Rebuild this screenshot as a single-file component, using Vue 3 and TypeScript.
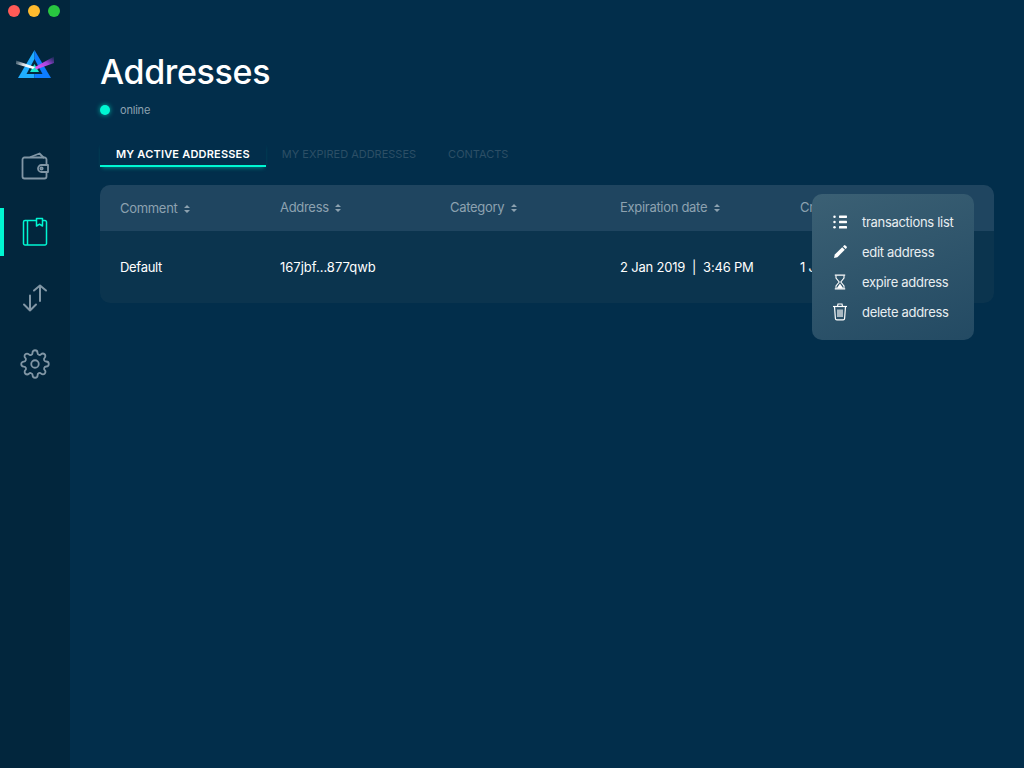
<template>
  <div class="app">
    <aside class="sidebar">
      <div class="traffic">
        <span class="light red"></span>
        <span class="light yellow"></span>
        <span class="light green"></span>
      </div>

      <div class="logo">
        <svg width="40" height="32" viewBox="0 0 40 32">
          <defs>
            <linearGradient id="rayL" x1="0" y1="0" x2="1" y2="0.4">
              <stop offset="0" stop-color="#fff" stop-opacity="0.15" />
              <stop offset="0.5" stop-color="#fff" stop-opacity="0.85" />
              <stop offset="1" stop-color="#fff" />
            </linearGradient>
            <linearGradient id="rayR" x1="0" y1="1" x2="1" y2="0">
              <stop offset="0" stop-color="#e65cf5" />
              <stop offset="0.55" stop-color="#a843e0" />
              <stop offset="1" stop-color="#7a3fc0" stop-opacity="0.1" />
            </linearGradient>
          </defs>
          <polygon points="19.5,1 19.5,29 3,29" fill="#20aeff" />
          <polygon points="19.5,1 19.5,29 36,29" fill="#0d7cff" />
          <polygon points="19.5,10 11.5,25 27.5,25" fill="#04273f" />
          <polygon points="19.5,15 15,23 24,23" fill="#19e6d0" />
          <polygon points="1,11.5 1,15 18,20 20,18" fill="url(#rayL)" />
          <polygon points="20,18 21,20.5 39,14 39,7.5" fill="url(#rayR)" />
        </svg>
      </div>

      <nav class="nav">
        <a v-for="item in navItems" :key="item.name" class="nav-item" :class="{ active: item.name === 'addresses' }">
          <svg v-if="item.name === 'wallet'" width="30" height="30" viewBox="0 0 30 30" fill="none" stroke="currentColor"
            stroke-width="1.8" stroke-linejoin="round" stroke-linecap="round">
            <path d="M26.5 14 V8.5 a2 2 0 0 0 -2 -2 H4.5 a2 2 0 0 0 -2 2 V25.5 a2 2 0 0 0 2 2 H24.5 a2 2 0 0 0 2 -2 V21" />
            <path d="M10.5 6 L19.5 2.5 L23.5 6.5" />
            <path d="M28 14 H21.5 a3.5 3.5 0 0 0 0 7 H28 Z" />
            <circle cx="21.5" cy="17.5" r="1.2" />
          </svg>
          <svg v-else-if="item.name === 'addresses'" width="30" height="30" viewBox="0 0 30 30" fill="none"
            stroke="currentColor" stroke-width="1.5" stroke-linejoin="round">
            <path d="M16 3.5 H5 a1.5 1.5 0 0 0 -1.5 1.5 V26.5 a1.5 1.5 0 0 0 1.5 1.5 H25 a1.5 1.5 0 0 0 1.5 -1.5 V5 a1.5 1.5 0 0 0 -1.5 -1.5 H23" />
            <path d="M7.5 3.5 V28" />
            <path d="M16.5 1.5 H22.5 V9 L19.5 7.2 L16.5 9 Z" />
          </svg>
          <svg v-else-if="item.name === 'transactions'" width="30" height="30" viewBox="0 0 30 30" fill="none"
            stroke="currentColor" stroke-width="2" stroke-linecap="round" stroke-linejoin="round">
            <path d="M20 18 V2.5 M14 7.5 L20 2.5 L26 7.5" />
            <path d="M10 12.5 V27.5 M4 21.5 L10 27.5 L16 21.5" />
          </svg>
          <svg v-else width="30" height="30" viewBox="0 0 24 24" fill="none" stroke="currentColor" stroke-width="1.45"
            stroke-linejoin="round" stroke-linecap="round">
            <circle cx="12" cy="12" r="3" />
            <path
              d="M19.4 15a1.65 1.65 0 0 0 .33 1.82l.06.06a2 2 0 0 1 0 2.83 2 2 0 0 1-2.83 0l-.06-.06a1.65 1.65 0 0 0-1.82-.33 1.65 1.65 0 0 0-1 1.51V21a2 2 0 0 1-2 2 2 2 0 0 1-2-2v-.09A1.65 1.65 0 0 0 9 19.4a1.65 1.65 0 0 0-1.82.33l-.06.06a2 2 0 0 1-2.83 0 2 2 0 0 1 0-2.83l.06-.06a1.65 1.65 0 0 0 .33-1.82 1.65 1.65 0 0 0-1.51-1H3a2 2 0 0 1-2-2 2 2 0 0 1 2-2h.09A1.65 1.65 0 0 0 4.6 9a1.65 1.65 0 0 0-.33-1.82l-.06-.06a2 2 0 0 1 0-2.83 2 2 0 0 1 2.83 0l.06.06a1.65 1.65 0 0 0 1.82.33H9a1.65 1.65 0 0 0 1-1.51V3a2 2 0 0 1 2-2 2 2 0 0 1 2 2v.09a1.65 1.65 0 0 0 1 1.51 1.65 1.65 0 0 0 1.82-.33l.06-.06a2 2 0 0 1 2.83 0 2 2 0 0 1 0 2.83l-.06.06a1.65 1.65 0 0 0-.33 1.82V9a1.65 1.65 0 0 0 1.51 1H21a2 2 0 0 1 2 2 2 2 0 0 1-2 2h-.09a1.65 1.65 0 0 0-1.51 1z" />
          </svg>
        </a>
      </nav>
    </aside>

    <main class="content">
      <h1 class="title">Addresses</h1>
      <div class="status">
        <span class="status-dot"></span>
        <span>online</span>
      </div>

      <div class="tabs">
        <div v-for="tab in tabs" :key="tab" class="tab" :class="{ active: tab === activeTab }">{{ tab }}</div>
      </div>

      <div class="table-wrap">
        <div class="table">
          <div class="row head">
            <div v-for="col in columns" :key="col" class="cell" :class="{ low: col === 'Comment' }">
              {{ col }}
              <svg class="sort" width="6" height="8" viewBox="0 0 6 8">
                <path d="M3 0 L6 3 H0 Z M3 8 L0 5 H6 Z" fill="currentColor" />
              </svg>
            </div>
          </div>
          <div class="row body">
            <div class="cell">Default</div>
            <div class="cell address">167jbf...877qwb</div>
            <div class="cell"></div>
            <div class="cell date">2 Jan 2019 &nbsp;|&nbsp; 3:46 PM</div>
            <div class="cell date">1 Jan 2019 &nbsp;|&nbsp; 3:46 PM</div>
          </div>
        </div>

        <ul class="menu">
          <li v-for="item in menuItems" :key="item.label" class="menu-item">
            <span class="menu-icon">
              <svg v-if="item.icon === 'list'" width="16" height="16" viewBox="0 0 16 16" fill="#fff">
                <circle cx="2.5" cy="2.7" r="1.25" />
                <circle cx="2.5" cy="8" r="1.25" />
                <circle cx="2.5" cy="13.3" r="1.25" />
                <rect x="7" y="1.5" width="8" height="2.4" rx="0.6" />
                <rect x="7" y="6.8" width="8" height="2.4" rx="0.6" />
                <rect x="7" y="12.1" width="8" height="2.4" rx="0.6" />
              </svg>
              <svg v-else-if="item.icon === 'edit'" width="16" height="16" viewBox="0 0 16 16" fill="#fff">
                <path d="M2 14 L2.8 10.6 L10.2 3.2 L12.8 5.8 L5.4 13.2 Z" />
                <path d="M11 2.4 L12 1.4 a1 1 0 0 1 1.4 0 L14.6 2.6 a1 1 0 0 1 0 1.4 L13.6 5 Z" />
              </svg>
              <svg v-else-if="item.icon === 'expire'" width="16" height="16" viewBox="0 0 16 16" fill="none">
                <path d="M2.8 1.2 H13.2 M2.8 14.8 H13.2" stroke="#fff" stroke-width="1.3" />
                <path d="M4 1.5 V4 L7.2 8 L4 12 V14.5 M12 1.5 V4 L8.8 8 L12 12 V14.5" stroke="#fff" stroke-width="1.1" />
                <path d="M8 9.5 L11.4 14.5 H4.6 Z" fill="#fff" />
              </svg>
              <svg v-else width="16" height="18" viewBox="0 0 16 18" fill="none" stroke="#fff" stroke-width="1.2">
                <path d="M1 3.5 H15" />
                <path d="M5.5 3.5 L6 1 H10 L10.5 3.5" />
                <path d="M2.5 3.5 L3.4 15.5 a1.4 1.4 0 0 0 1.4 1.3 H11.2 a1.4 1.4 0 0 0 1.4 -1.3 L13.5 3.5" />
                <path d="M6 6.5 V14 M8 6.5 V14 M10 6.5 V14" />
              </svg>
            </span>
            {{ item.label }}
          </li>
        </ul>
      </div>
    </main>
  </div>
</template>

<script setup lang="ts">
const navItems = [
  { name: 'wallet' },
  { name: 'addresses' },
  { name: 'transactions' },
  { name: 'settings' },
]

const tabs = ['MY ACTIVE ADDRESSES', 'MY EXPIRED ADDRESSES', 'CONTACTS']
const activeTab = 'MY ACTIVE ADDRESSES'

const columns = ['Comment', 'Address', 'Category', 'Expiration date', 'Created on']

const menuItems = [
  { label: 'transactions list', icon: 'list' },
  { label: 'edit address', icon: 'edit' },
  { label: 'expire address', icon: 'expire' },
  { label: 'delete address', icon: 'delete' },
]
</script>

<style>
html,
body {
  margin: 0;
  background: #022e4b;
}
</style>

<style scoped>
.app {
  display: flex;
  width: 1024px;
  height: 768px;
  overflow: hidden;
  background: #022e4b;
  color: #fff;
  font-family: Inter, 'Liberation Sans', sans-serif;
}

.sidebar {
  flex: 0 0 70px;
  background: #02263d;
  display: flex;
  flex-direction: column;
}

.traffic {
  display: flex;
  gap: 8px;
  padding: 5px 0 0 8px;
}

.light {
  width: 12px;
  height: 12px;
  border-radius: 50%;
}

.red {
  background: #ff5b57;
}

.yellow {
  background: #ffbb2e;
}

.green {
  background: #29c740;
}

.logo {
  display: flex;
  justify-content: center;
  margin-top: 32px;
  height: 32px;
}

.nav {
  display: flex;
  flex-direction: column;
  gap: 18px;
  margin-top: 61px;
}

.nav-item {
  height: 48px;
  display: flex;
  align-items: center;
  justify-content: center;
  color: #8196a5;
  border-left: 4px solid transparent;
  margin-right: 4px;
}

.nav-item.active {
  color: #00f6d2;
  border-left-color: #00f6d2;
}

.content {
  flex: 1;
  min-width: 0;
  padding: 50px 30px 0;
}

.title {
  margin: 0;
  font-size: 34px;
  line-height: 44px;
  font-weight: 500;
  letter-spacing: -0.35px;
}

.status {
  display: flex;
  align-items: center;
  gap: 10px;
  margin-top: 5px;
  font-size: 11px;
  line-height: 22px;
  letter-spacing: -0.2px;
  color: #8da2b0;
}

.status-dot {
  width: 10px;
  height: 10px;
  border-radius: 50%;
  background: #00f6d2;
  box-shadow: 0 0 5px rgba(0, 246, 210, 0.7);
}

.tabs {
  display: flex;
  margin-top: 21px;
}

.tab {
  padding: 0 16px;
  height: 25px;
  line-height: 24px;
  font-size: 11px;
  color: #2c4f66;
  border-bottom: 2px solid transparent;
  box-sizing: border-box;
}

.tab.active {
  color: #fff;
  font-weight: 600;
  letter-spacing: 0.2px;
  border-bottom-color: #00f6d2;
  box-shadow: 0 3px 4px -2px rgba(0, 246, 210, 0.4);
}

.table-wrap {
  position: relative;
  margin-top: 18px;
}

.table {
  border-radius: 10px;
  overflow: hidden;
  background: #0b344e;
}

.row {
  display: grid;
  grid-template-columns: 160px 170px 170px 180px 1fr;
  padding-left: 20px;
  align-items: center;
  font-size: 13px;
  letter-spacing: -0.3px;
}

.head {
  height: 46px;
  box-sizing: border-box;
  padding-bottom: 2px;
  background: #1f4560;
  color: #8da2b0;
}

.body {
  height: 72px;
  color: #fff;
}

.cell {
  white-space: nowrap;
}

.address {
  letter-spacing: 0;
}

.date {
  letter-spacing: -0.2px;
}

.low {
  padding-top: 2px;
}

.sort {
  margin-left: 3px;
}

.menu {
  position: absolute;
  top: 9px;
  right: 20px;
  width: 162px;
  height: 146px;
  box-sizing: border-box;
  margin: 0;
  padding: 13px 0 0 20px;
  list-style: none;
  border-radius: 10px;
  background: linear-gradient(160deg, #3b6074, #234a63);
}

.menu-item {
  display: flex;
  align-items: center;
  height: 30px;
  font-size: 13px;
  letter-spacing: -0.3px;
  color: #e8eef1;
}

.menu-icon {
  display: flex;
  width: 30px;
}
</style>
